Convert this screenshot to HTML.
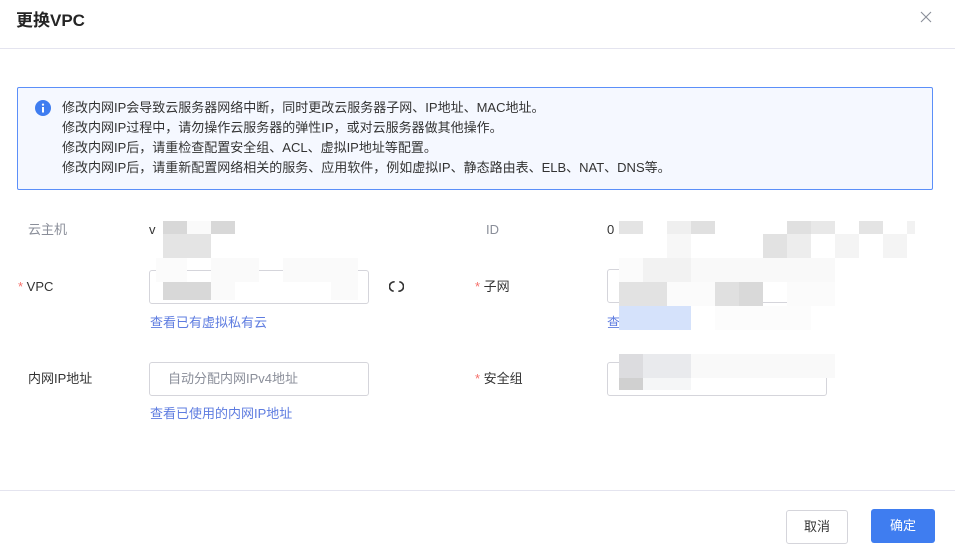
<!DOCTYPE html>
<html><head><meta charset="utf-8"><style>
*{box-sizing:border-box;margin:0;padding:0}
body{width:955px;height:551px;background:#fff;position:relative;overflow:hidden;font-family:"Liberation Sans","Noto Sans CJK SC",sans-serif;color:#333;font-size:13px}
.a{position:absolute}
.title{left:16px;top:10px;font-size:17px;font-weight:bold;color:#252525;line-height:22px}
.hr{left:0;width:955px;height:1px;background:#e4e4ef}
.alert{left:17px;top:87px;width:916px;height:103px;border:1px solid #5b8ff9;border-radius:2px;background:#f5f8ff}
.alert p{position:absolute;left:44px;font-size:13px;color:#333;line-height:18px;white-space:nowrap}
.lbl{font-size:13px;color:#333;line-height:18px}
.grey{color:#8a8e99}
.star{color:#f66f6a}
.inp{border:1px solid #d5d5db;border-radius:3px;height:34px;width:220px;background:#fff}
.link{color:#5e7ce0;font-size:13px;line-height:18px}
.btn{height:34px;border-radius:3px;font-size:13px;text-align:center;line-height:32px}
.b{position:absolute}
</style></head><body>
<div class="a title">更换VPC</div>
<svg class="a" style="left:920px;top:11px" width="12" height="12" viewBox="0 0 12 12" stroke="#8a8e99" stroke-width="1.1"><path d="M1 1L11 11M11 1L1 11"/></svg>
<div class="a hr" style="top:48px"></div>

<div class="a alert">
<svg class="a" style="left:17px;top:12px" width="16" height="16" viewBox="0 0 16 16"><circle cx="8" cy="8" r="8" fill="#3f7df0"/><rect x="7" y="7" width="2" height="5.5" fill="#fff"/><circle cx="8" cy="4.6" r="1.1" fill="#fff"/></svg>
<p style="top:11px">修改内网IP会导致云服务器网络中断，同时更改云服务器子网、IP地址、MAC地址。</p>
<p style="top:31px">修改内网IP过程中，请勿操作云服务器的弹性IP，或对云服务器做其他操作。</p>
<p style="top:51px">修改内网IP后，请重检查配置安全组、ACL、虚拟IP地址等配置。</p>
<p style="top:71px">修改内网IP后，请重新配置网络相关的服务、应用软件，例如虚拟IP、静态路由表、ELB、NAT、DNS等。</p>
</div>

<div class="a lbl grey" style="left:28px;top:221px">云主机</div>
<div class="a lbl" style="left:149px;top:221px">v</div>
<div class="a lbl" style="left:18px;top:278px"><span class="star">*</span> VPC</div>
<div class="a inp" style="left:149px;top:270px;width:220px"></div>
<svg class="a" style="left:389px;top:279px" width="15" height="15" viewBox="0 0 16 16" fill="none" stroke="#333" stroke-width="1.8"><path d="M6 3A5 5 0 0 0 5 13"/><path d="M10 13A5 5 0 0 0 11 3"/></svg>
<div class="a link" style="left:150px;top:314px">查看已有虚拟私有云</div>
<div class="a lbl" style="left:28px;top:370px">内网IP地址</div>
<div class="a inp" style="left:149px;top:362px"></div>
<div class="a" style="left:168px;top:370px;color:#8a8e99;font-size:13px;line-height:18px">自动分配内网IPv4地址</div>
<div class="a link" style="left:150px;top:405px">查看已使用的内网IP地址</div>

<div class="a lbl grey" style="left:486px;top:221px">ID</div>
<div class="a lbl" style="left:607px;top:221px">0</div>
<div class="a lbl" style="left:475px;top:278px"><span class="star">*</span> 子网</div>
<div class="a inp" style="left:607px;top:269px"></div>
<div class="a link" style="left:607px;top:314px">查</div>
<div class="a lbl" style="left:475px;top:370px"><span class="star">*</span> 安全组</div>
<div class="a inp" style="left:607px;top:362px"></div>

<div class="b" style="left:163px;top:221px;width:24px;height:13px;background:#d8d8d8"></div>
<div class="b" style="left:187px;top:221px;width:24px;height:13px;background:#fafafa"></div>
<div class="b" style="left:211px;top:221px;width:24px;height:13px;background:#d8d8d8"></div>
<div class="b" style="left:163px;top:234px;width:48px;height:24px;background:#e4e4e4"></div>
<div class="b" style="left:156px;top:258px;width:31px;height:24px;background:#fbfbfb"></div>
<div class="b" style="left:211px;top:258px;width:48px;height:24px;background:#fafafa"></div>
<div class="b" style="left:283px;top:258px;width:75px;height:24px;background:#fafafa"></div>
<div class="b" style="left:163px;top:282px;width:48px;height:18px;background:#d8d8d8"></div>
<div class="b" style="left:211px;top:282px;width:24px;height:18px;background:#fafafa"></div>
<div class="b" style="left:331px;top:282px;width:27px;height:18px;background:#fafafa"></div>
<div class="b" style="left:619px;top:221px;width:24px;height:13px;background:#e4e4e4"></div>
<div class="b" style="left:667px;top:221px;width:24px;height:13px;background:#efefef"></div>
<div class="b" style="left:691px;top:221px;width:24px;height:13px;background:#e0e0e0"></div>
<div class="b" style="left:787px;top:221px;width:24px;height:13px;background:#e0e0e0"></div>
<div class="b" style="left:811px;top:221px;width:24px;height:13px;background:#e8e8e8"></div>
<div class="b" style="left:859px;top:221px;width:24px;height:13px;background:#e4e4e4"></div>
<div class="b" style="left:907px;top:221px;width:8px;height:13px;background:#f2f2f2"></div>
<div class="b" style="left:667px;top:234px;width:24px;height:24px;background:#f7f7f7"></div>
<div class="b" style="left:763px;top:234px;width:24px;height:24px;background:#e2e2e2"></div>
<div class="b" style="left:787px;top:234px;width:24px;height:24px;background:#ededed"></div>
<div class="b" style="left:835px;top:234px;width:24px;height:24px;background:#f4f4f4"></div>
<div class="b" style="left:883px;top:234px;width:24px;height:24px;background:#f4f4f4"></div>
<div class="b" style="left:619px;top:258px;width:24px;height:24px;background:#fbfbfb"></div>
<div class="b" style="left:643px;top:258px;width:48px;height:24px;background:#f2f2f2"></div>
<div class="b" style="left:691px;top:258px;width:144px;height:24px;background:#f9f9f9"></div>
<div class="b" style="left:619px;top:282px;width:48px;height:24px;background:#e2e2e2"></div>
<div class="b" style="left:667px;top:282px;width:48px;height:24px;background:#fbfbfb"></div>
<div class="b" style="left:715px;top:282px;width:24px;height:24px;background:#e0e0e0"></div>
<div class="b" style="left:739px;top:282px;width:24px;height:24px;background:#d9d9d9"></div>
<div class="b" style="left:787px;top:282px;width:48px;height:24px;background:#fbfbfb"></div>
<div class="b" style="left:619px;top:306px;width:72px;height:24px;background:#d5e2fb"></div>
<div class="b" style="left:715px;top:306px;width:96px;height:24px;background:#fcfcfc"></div>
<div class="b" style="left:619px;top:354px;width:24px;height:24px;background:#dcdcdf"></div>
<div class="b" style="left:643px;top:354px;width:48px;height:24px;background:#e9eaed"></div>
<div class="b" style="left:691px;top:354px;width:144px;height:24px;background:#f9f9f9"></div>
<div class="b" style="left:619px;top:378px;width:24px;height:12px;background:#d0d0d0"></div>
<div class="b" style="left:643px;top:378px;width:48px;height:12px;background:#f5f6f7"></div>

<div class="a hr" style="top:490px"></div>
<div class="a btn" style="left:786px;top:510px;width:62px;border:1px solid #d5d5db;color:#333">取消</div>
<div class="a btn" style="left:871px;top:509px;width:64px;background:#3f7df0;color:#fff;line-height:34px">确定</div>
</body></html>
